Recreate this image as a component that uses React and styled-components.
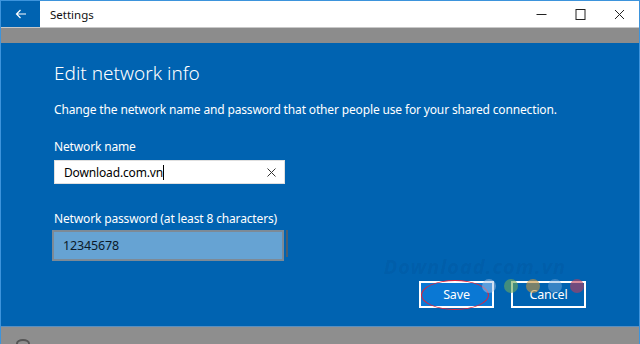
import React from 'react'
import styled, { createGlobalStyle } from 'styled-components'

const Global = createGlobalStyle`
  html, body { margin: 0; padding: 0; background: #0063b1; }
  body { font-family: 'Noto Sans', 'Open Sans', sans-serif; }
`

function App() {
  return (
    <Window>
      <Global />
      <TitleBar>
        <BackButton>
          <svg width="12" height="10" viewBox="0 0 12 10">
            <path d="M11 5H1.5M5.5 1L1.5 5l4 4" stroke="#fff" strokeWidth="1.2" fill="none" />
          </svg>
        </BackButton>
        <Title>Settings</Title>
        <Controls>
          <CtrlBtn>
            <svg width="11" height="11" viewBox="0 0 11 11">
              <path d="M0.5 5.5h10" stroke="#222" strokeWidth="1" />
            </svg>
          </CtrlBtn>
          <CtrlBtn>
            <svg width="11" height="11" viewBox="0 0 11 11">
              <rect x="1" y="0.5" width="9" height="10" stroke="#222" strokeWidth="1" fill="none" />
            </svg>
          </CtrlBtn>
          <CtrlBtn>
            <svg width="11" height="11" viewBox="0 0 11 11">
              <path d="M1 1l9 9M10 1l-9 9" stroke="#222" strokeWidth="1" />
            </svg>
          </CtrlBtn>
        </Controls>
      </TitleBar>
      <Band />
      <Content>
        <Heading>Edit network info</Heading>
        <Description>Change the network name and password that other people use for your shared connection.</Description>
        <Label>Network name</Label>
        <NameField>
          <FieldText>Download.com.vn<Caret /></FieldText>
          <svg width="9" height="9" viewBox="0 0 9 9">
            <path d="M0.5 0.5l8 8M8.5 0.5l-8 8" stroke="#333" strokeWidth="1" />
          </svg>
        </NameField>
        <Label gap={26}>Network password (at least 8 characters)</Label>
        <PasswordRow>
          <PasswordField>12345678</PasswordField>
          <SideBar />
        </PasswordRow>
        <Buttons>
          <Watermark>Download.com.vn</Watermark>
          <Button primary>
            Save
            <Circle />
          </Button>
          <Button>Cancel</Button>
          <Dots>
            <Dot color="rgba(170,195,230,0.5)" />
            <Dot color="rgba(110,170,90,0.6)" />
            <Dot color="rgba(200,150,60,0.6)" />
            <Dot color="rgba(120,170,220,0.45)" />
            <Dot color="rgba(190,60,90,0.6)" />
          </Dots>
        </Buttons>
      </Content>
      <BottomBand>
        <Gear />
      </BottomBand>
    </Window>
  )
}

const Window = styled.div`
  width: 640px;
  height: 344px;
  display: flex;
  flex-direction: column;
  box-sizing: border-box;
  border-left: 1px solid #3d94dc;
  border-right: 1px solid #3d94dc;
  overflow: hidden;
`

const TitleBar = styled.div`
  height: 26px;
  display: flex;
  align-items: center;
  background: #fff;
  border-top: 1px solid #3d94dc;
  border-bottom: 1px solid #c8c8c8;
`

const BackButton = styled.div`
  width: 39px;
  height: 100%;
  background: #0063b1;
  display: flex;
  align-items: center;
  justify-content: center;
`

const Title = styled.div`
  margin-left: 10px;
  font-size: 11.5px;
  color: #111;
  flex: 1;
`

const Controls = styled.div`
  display: flex;
`

const CtrlBtn = styled.div`
  width: 39px;
  height: 26px;
  display: flex;
  align-items: center;
  justify-content: center;
`

const Band = styled.div`
  height: 15px;
  background: #8c8c8c;
`

const Content = styled.div`
  flex: 1;
  background: #0063b1;
  padding: 16px 53px 0 53px;
  display: flex;
  flex-direction: column;
  color: #fff;
  letter-spacing: -0.15px;
`

const Heading = styled.div`
  font-size: 19px;
  font-weight: 300;
  line-height: 28px;
  letter-spacing: 0;
`

const Description = styled.div`
  margin-top: 14px;
  font-size: 12px;
  line-height: 18px;
`

const Label = styled.div`
  margin-top: ${p => p.gap || 19}px;
  font-size: 12px;
  line-height: 18px;
`

const NameField = styled.div`
  margin-top: 4px;
  width: 231px;
  height: 24px;
  box-sizing: border-box;
  background: #fff;
  border: 1px solid #e0e0e0;
  display: flex;
  align-items: center;
  justify-content: space-between;
  padding: 0 8px 0 9px;
  color: #000;
`

const FieldText = styled.div`
  font-size: 12px;
  display: flex;
  align-items: center;
`

const Caret = styled.span`
  width: 1px;
  height: 15px;
  background: #000;
`

const PasswordRow = styled.div`
  margin-top: 2px;
  margin-left: -2px;
  display: flex;
  align-items: flex-start;
`

const PasswordField = styled.div`
  width: 232px;
  height: 31px;
  box-sizing: border-box;
  border: 2px solid #7d8a96;
  background: #66a3d3;
  color: #0b1a2a;
  font-size: 12.5px;
  display: flex;
  align-items: center;
  padding-left: 9px;
`

const SideBar = styled.div`
  width: 2px;
  height: 27px;
  margin-left: 2px;
  background: #4b5e70;
`

const Buttons = styled.div`
  position: relative;
  margin-top: 20px;
  display: flex;
  justify-content: flex-end;
  gap: 17px;
`

const Button = styled.div`
  position: relative;
  width: 75px;
  height: 27px;
  box-sizing: border-box;
  border: 2px solid #fff;
  background: ${p => (p.primary ? '#0a78d4' : 'transparent')};
  color: #fff;
  font-size: 12.5px;
  display: flex;
  align-items: center;
  justify-content: center;
  z-index: 1;
`

const Circle = styled.span`
  position: absolute;
  left: 0;
  top: -3px;
  width: 66px;
  height: 28px;
  border: 1.5px solid #e0203a;
  border-radius: 50%;
`

const Watermark = styled.div`
  position: absolute;
  right: 20px;
  top: -28px;
  font-size: 20px;
  font-weight: 700;
  font-style: italic;
  color: rgba(0, 30, 80, 0.08);
  letter-spacing: 1px;
`

const Dots = styled.div`
  position: absolute;
  right: 2px;
  top: -2px;
  pointer-events: none;
  display: flex;
  gap: 8px;
  z-index: 2;
`

const Dot = styled.span`
  width: 14px;
  height: 14px;
  border-radius: 50%;
  background: ${p => p.color};
`

const BottomBand = styled.div`
  height: 17px;
  background: #8e8e8e;
  border-top: 1px solid #5a8fc0;
  position: relative;
`

const Gear = styled.span`
  position: absolute;
  left: 15px;
  bottom: -4px;
  width: 10px;
  height: 7px;
  border-radius: 50% 50% 0 0;
  border: 2px solid #555;
  border-bottom: none;
`

export default App
